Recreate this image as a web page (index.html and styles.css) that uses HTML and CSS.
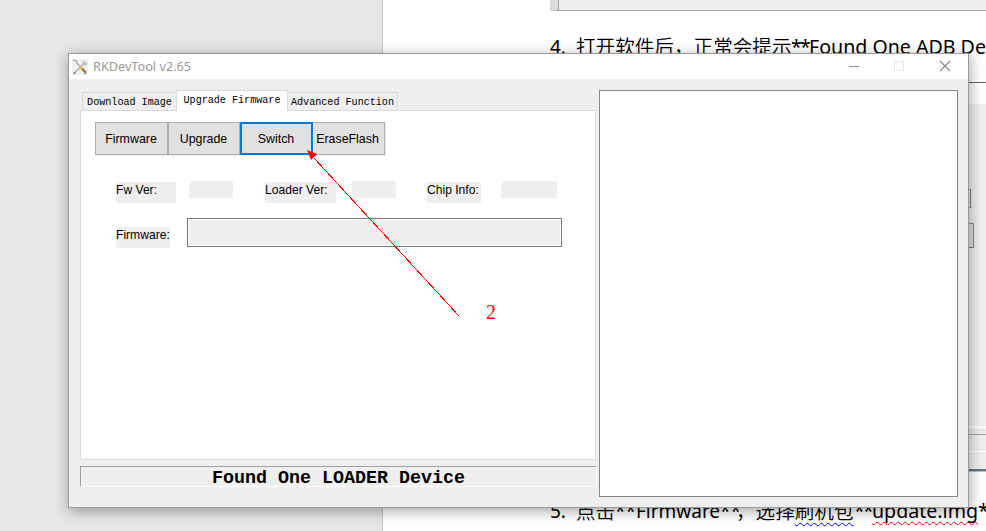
FILE: index.html
```html
<!DOCTYPE html>
<html lang="zh-CN">
<head>
<meta charset="utf-8">
<title>RKDevTool v2.65</title>
<link rel="stylesheet" href="styles.css">
</head>
<body>
<main class="desktop">
  <div class="document"></div>
  <div class="embed embed-top"></div>
  <div class="embed embed-side">
    <i class="side-box small"></i><i class="side-box large"></i>
  </div>
  <div class="side-status"></div>
  <p class="line line-four"><span class="num">4.</span><span class="cjk c1">打开软件后，正常会提示</span><span class="latin l1"><span class="stars">**</span>Found One ADB De</span></p>
  <p class="line line-five"><span class="num">5.</span><span class="cjk c2">点击</span><span class="latin l2">**Firmware**</span><span class="cjk c3">，选择<span class="wavy blue">刷机包</span></span><span class="latin l3"><span class="stars">**</span><span class="wavy red">update.img</span>*</span></p>

  <section class="window">
    <header class="titlebar">
      <svg class="app-icon" width="16" height="16" viewBox="0 0 16 16">
        <rect width="16" height="16" fill="#f0f0ef"/>
        <path d="M2.5 14 L11.5 5" stroke="#a9b3b8" stroke-width="1.6"/>
        <path d="M10.5 5.5 Q10 2 13 1 L12.3 3.2 L13.7 4.3 L15.5 3 Q15.5 6.5 12 6.5" fill="#b4bdc2"/>
        <path d="M1 1.3 L4.2 1.7 L5.5 5 L8.3 7.5" fill="none" stroke="#a5afb4" stroke-width="1.5"/>
        <path d="M7.8 7.5 L12.5 13" stroke="#dcb95c" stroke-width="2.6"/>
        <path d="M10.4 9.3 L13.8 13.3 L12.5 15" fill="none" stroke="#55503e" stroke-width="1.2"/>
        <path d="M1.5 15 L3.5 13" stroke="#7d878c" stroke-width="1.6"/>
      </svg>
      <span class="title">RKDevTool v2.65</span>
      <svg class="controls" width="104" height="12" viewBox="0 0 104 12" fill="none">
        <path d="M1 6.5H11" stroke="#8c8c8c"/>
        <rect x="46.5" y="1.5" width="9" height="9" stroke="#e7e7e7"/>
        <path d="M92 1L102 11M102 1L92 11" stroke="#858585" stroke-width="1.1"/>
      </svg>
    </header>
    <div class="client">
      <div class="left">
        <nav class="tabs">
          <span class="tab download">Download Image</span>
          <span class="tab active">Upgrade Firmware</span>
          <span class="tab advanced">Advanced Function</span>
        </nav>
        <div class="panel">
          <div class="buttons">
            <button>Firmware</button><button>Upgrade</button><button class="focused">Switch</button><button class="erase">EraseFlash</button>
          </div>
          <div class="info">
            <label>Fw Ver:</label><output></output>
            <label>Loader Ver:</label><output></output>
            <label>Chip Info:</label><output></output>
          </div>
          <div class="path-row"><label>Firmware:</label><div class="field"></div></div>
        </div>
        <div class="status">Found One LOADER Device</div>
      </div>
      <div class="log"></div>
    </div>
  </section>
  <svg class="arrow" width="156" height="170" viewBox="0 0 156 170">
    <path d="M8 8L153 166" stroke="#f00" stroke-width="1" shape-rendering="crispEdges"/>
    <path d="M1 0L11 4L5 10Z" fill="#f00"/>
  </svg>
  <span class="mark">2</span>
</main>
</body>
</html>
```

FILE: styles.css
```css
* { box-sizing: border-box; }
body { margin: 0; overflow: hidden; }
.desktop {
  position: relative;
  width: 986px;
  height: 531px;
  overflow: hidden;
  background: #e6e6e6;
  font-family: "Liberation Sans", Arial, sans-serif;
}
.document {
  position: absolute;
  inset: 0 0 0 382px;
  background: #fff;
  border-left: 1px solid #c6c6c6;
}
.embed { position: absolute; background: #efefef; }
.embed-top {
  left: 550px; top: 0; width: 436px; height: 11px;
  border-left: 8px solid #dcdcdc;
  border-bottom: 1px solid #a5a5a5;
  box-shadow: inset 1px 0 #a0a0a0;
}
.embed-side {
  left: 940px; top: 82px; width: 46px; height: 346px;
  border-top: 1px solid #5b6872;
  background: linear-gradient(#fff 21px, #efefef 21px);
}
.side-box { position: absolute; left: 0; border: 1px solid #858585; }
.side-box.small { top: 106px; width: 31px; height: 19px; }
.side-box.large { top: 140px; width: 34px; height: 25px; background: #e1e1e1; }
.side-status {
  position: absolute;
  left: 940px; top: 426px; width: 46px; height: 46px;
  background: linear-gradient(#fff 2px, #efefef 2px 4px, #e0e0e0 4px 5px, #efefef 5px 8px, #a3a3a3 8px 9px, #efefef 9px 25px, #fff 25px 26px, #efefef 26px 43px, #607682 43px 45px, #b8c0c5 45px);
}
.line {
  position: absolute;
  left: 550px;
  display: flex;
  margin: 0;
  height: 28px;
  line-height: 28px;
  font-family: "Noto Sans", "Noto Sans CJK SC", sans-serif;
  font-size: 19px;
  color: #000;
  white-space: nowrap;
}
.line-four { top: 33px; }
.line-five { top: 497px; }
.num { width: 26px; }
.cjk {
  flex: none;
  font-family: "Noto Sans CJK SC", sans-serif;
  font-weight: 350;
  font-size: 19.6px;
}
.c1 { width: 215px; margin-top: -1px; }
.c2 { width: 39px; }
.c3 { width: 119px; }
.latin { flex: none; }
.l1 { font-size: 19.6px; }
.l2 { width: 121px; }
.l3 { font-size: 19.6px; margin-left: -1px; }
.stars { letter-spacing: -1.8px; }
.wavy { text-decoration: underline wavy 1px; text-underline-offset: 3px; text-decoration-skip-ink: none; }
.blue { text-decoration-color: #00f; }
.red { text-decoration-color: #f00; }

.window {
  position: absolute;
  left: 68px; top: 53px; width: 901px; height: 455px;
  display: flex;
  flex-direction: column;
  border: 1px solid #999;
  background: #efefef;
  box-shadow: 1px 3px 13px rgba(0, 0, 0, .36);
}
.titlebar {
  display: flex;
  align-items: center;
  height: 25px;
  padding: 0 16px 2px 3px;
  background: #fff;
}
.app-icon { margin-top: 2px; }
.title {
  margin-left: 5px;
  font: 12.7px/20px "Noto Sans", sans-serif;
  color: #999;
}
.controls { margin-left: auto; }
.client {
  display: flex;
  flex: 1;
  gap: 2px;
  padding: 11px 10px 10px 11px;
}
.left { display: flex; flex-direction: column; width: 517px; }
.tabs {
  display: flex;
  align-items: flex-end;
  height: 21px;
  padding-left: 2px;
  z-index: 1;
}
.tab {
  height: 18px;
  margin-bottom: 1px;
  border: 1px solid #d9d9d9;
  border-bottom: 0;
  font: 10.1px/19px "Liberation Mono", monospace;
  color: #000;
  text-align: center;
  white-space: nowrap;
}
.download { width: 94px; border-right: 0; }
.active { width: 112px; height: 21px; margin-bottom: 0; background: #fff; line-height: 20px; }
.advanced { width: 110px; border-left: 0; }
.panel {
  width: 516px;
  height: 350px;
  margin-top: -1px;
  padding: 11px 0 0 14px;
  border: 1px solid #d9d9d9;
  background: #fff;
}
.buttons {
  display: flex;
  width: 291px;
  height: 34px;
  background: #efefef;
}
button {
  width: 73px;
  height: 33px;
  padding: 0 1px 0 0;
  border: 1px solid #adadad;
  background: #e1e1e1;
  font: 12.4px "Liberation Sans", Arial, sans-serif;
  color: #000;
}
button:nth-child(2) { width: 72px; }
.focused { border: 2px solid #0078d7; }
.erase { border-left-color: #efefef; width: 72px; text-indent: -2px; }
.info {
  display: grid;
  grid-template-columns: 60px 44px 90px 47px 72px 63px;
  column-gap: 13px;
  margin: 25px 0 0 21px;
}
.info label:nth-of-type(2) { margin-left: 19px; width: 71px; }
.info output:nth-of-type(2) { margin-left: 3px; }
.info label:nth-of-type(3) { margin-left: 18px; }
.info output:nth-of-type(3) { margin-left: 7px; }
label {
  height: 21px;
  margin-top: 1px;
  background: #efefef;
  font-size: 12.1px;
  line-height: 16px;
  white-space: nowrap;
}
output { height: 17px; background: #efefef; }
.path-row { display: flex; gap: 17px; margin: 15px 0 0 21px; }
.path-row label { width: 54px; margin-top: 9px; }
.field {
  width: 375px;
  height: 29px;
  border: 1px solid #7a7a7a;
  box-shadow: inset 0 0 0 1px #fff;
  background: #efefef;
}
.status {
  height: 21px;
  margin-top: 6px;
  border: 1px solid #a0a0a0;
  border-right-color: #fff;
  border-bottom-color: #fff;
  font: bold 18.35px/23px "Liberation Mono", monospace;
  color: #000;
  text-align: center;
}
.log { width: 359px; height: 407px; border: 1px solid #828790; background: #fff; }
.arrow { position: absolute; left: 306px; top: 150px; }
.mark {
  position: absolute;
  left: 486px; top: 300px;
  font: 20px/24px "Liberation Serif", serif;
  color: #f00;
}
```
